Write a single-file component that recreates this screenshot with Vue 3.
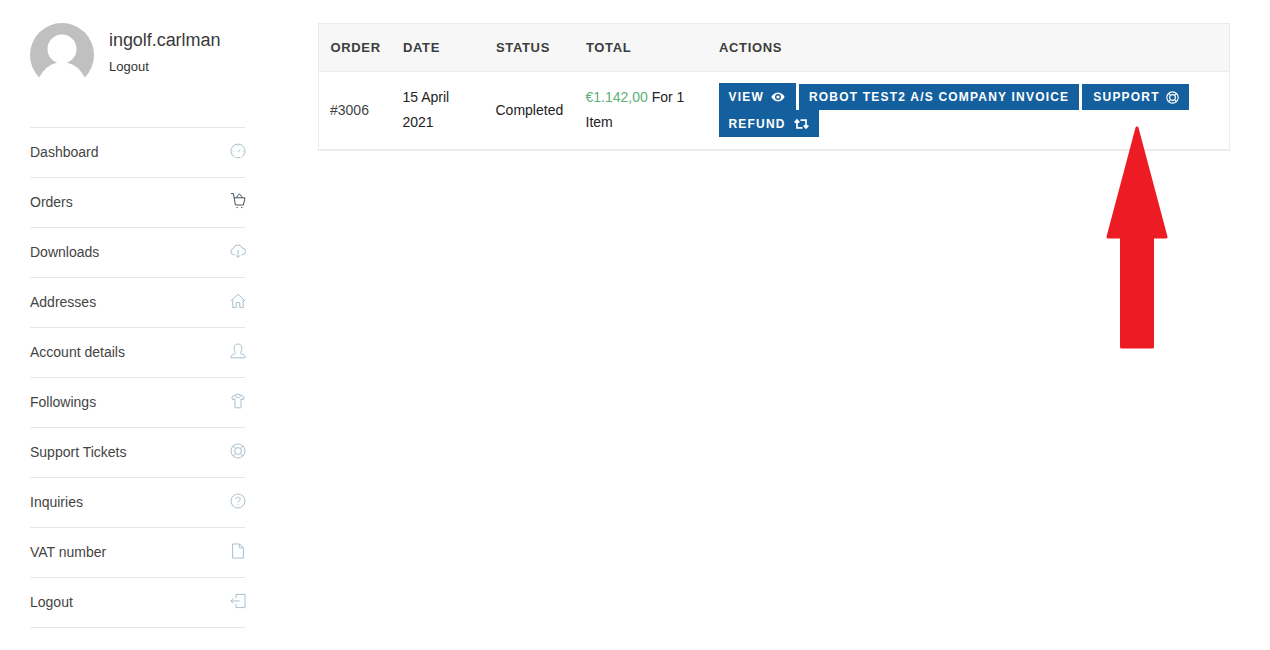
<script setup>
const menu = [
  { label: 'Dashboard', icon: 'gauge' },
  { label: 'Orders', icon: 'cart' },
  { label: 'Downloads', icon: 'cloud' },
  { label: 'Addresses', icon: 'home' },
  { label: 'Account details', icon: 'user' },
  { label: 'Followings', icon: 'shirt' },
  { label: 'Support Tickets', icon: 'buoy' },
  { label: 'Inquiries', icon: 'help' },
  { label: 'VAT number', icon: 'file' },
  { label: 'Logout', icon: 'exit' }
]
const paths = {
  gauge: 'M4.6 14.2A7 7 0 1 1 11.4 14.2M5.6 14.6H10.4M8 9L10.4 6.400M8 2.400V3.200M2.600 8H3.400M12.600 8H13.400',
  cart: 'M1 .6H3.400L5.400 12H13.400M4 4.800H15L13.400 12M6 4.800L9.400 .8L12.600 4.800M6.400 14.600H7.800M11 14.600H12.400',
  cloud: 'M4.6 11.8H3.8A3.2 3.2 0 0 1 3.4 5.5A4.6 4.6 0 0 1 12.2 5A3.4 3.4 0 0 1 12.2 11.8H11.4M8 6.8V14.4M6 12.4L8 14.4L10 12.4',
  home: 'M.8 8L8 1.2L15.2 8M2.8 6.4V14.6H6.2V9.6H9.8V14.6H13.2V6.4',
  user: 'M1 14.8V13.4C1 11.6 5.6 11.2 5.8 9.8C4.6 8.8 4.2 7 4.2 5.2C4.2 2.6 5.8 1 8 1C10.2 1 11.8 2.6 11.8 5.2C11.8 7 11.4 8.8 10.2 9.8C10.4 11.2 15 11.6 15 13.4V14.8Z',
  shirt: 'M5.6 3.4A2.4 2.4 0 1 1 10.4 3.4M5.4 1.8L1.8 4L2.8 6.8L5 5.8V14.8H11V5.8L13.2 6.8L14.2 4L10.6 1.8M5.6 3.4C6.4 5 9.6 5 10.4 3.4',
  buoy: 'M8 1A7 7 0 1 0 8 15A7 7 0 1 0 8 1ZM8 4.6A3.4 3.4 0 1 0 8 11.4A3.4 3.4 0 1 0 8 4.6ZM3.2 2.9L5.6 5.6M12.8 2.9L10.4 5.6M3.2 13.1L5.6 10.4M12.8 13.1L10.4 10.4',
  help: 'M8 1A7 7 0 1 0 8 15A7 7 0 1 0 8 1ZM5.9 6.2C5.9 3.6 10.2 3.6 10.2 6.2C10.2 8 8 8 8 9.8M8 11.2V12',
  file: 'M2.6 1H9.6L13.4 4.8V15H2.6ZM9.6 1V4.8H13.4',
  exit: 'M6 5V1.4H15V14.6H6V11M.8 8H9.6M.8 8L3.4 5.6M.8 8L3.4 10.4'
}
</script>

<template>
  <div class="page">
    <aside class="side">
      <div class="profile">
        <svg class="avatar" width="64" height="64" viewBox="0 0 64 64">
          <circle cx="32" cy="32" r="32" fill="#c0c0c0" />
          <ellipse cx="32" cy="72" rx="27" ry="33" fill="#fff" />
          <circle cx="32" cy="26" r="14.5" fill="#fff" />
          <rect x="27" y="36" width="10" height="6" fill="#fff" />
        </svg>
        <div class="who">
          <div class="name">ingolf.carlman</div>
          <a class="out">Logout</a>
        </div>
      </div>
      <nav class="menu">
        <a v-for="m in menu" :key="m.label" class="item">
          <span>{{ m.label }}</span>
          <svg class="ico" :class="{ dark: m.icon === 'cart' }" width="16" height="16" viewBox="0 0 16 16">
            <path :d="paths[m.icon]" />
          </svg>
        </a>
      </nav>
    </aside>

    <main class="main">
      <table class="orders">
        <colgroup>
          <col class="c1" /><col class="c2" /><col class="c3" /><col class="c4" /><col />
        </colgroup>
        <thead>
          <tr>
            <th>ORDER</th><th>DATE</th><th>STATUS</th><th>TOTAL</th><th>ACTIONS</th>
          </tr>
        </thead>
        <tbody>
          <tr>
            <td class="num">#3006</td>
            <td>15 April 2021</td>
            <td>Completed</td>
            <td><span class="price">€1.142,00</span> For 1 Item</td>
            <td class="acts">
              <div class="btns">
                <a class="btn tall view">VIEW
                  <svg width="14" height="10" viewBox="0 0 14 10">
                    <path d="M7 .6C3.8.6 1.4 3 .4 5C1.4 7 3.8 9.4 7 9.4C10.2 9.4 12.6 7 13.6 5C12.6 3 10.2.6 7 .6Z" fill="#fff" />
                    <circle cx="7" cy="5" r="3" fill="#14609e" />
                    <circle cx="7" cy="5" r="1.6" fill="#fff" />
                  </svg>
                </a>
                <a class="btn">ROBOT TEST2 A/S COMPANY INVOICE</a>
                <a class="btn sup">SUPPORT
                  <svg width="13" height="13" viewBox="0 0 16 16" fill="none" stroke="#fff" stroke-width="1.4">
                    <circle cx="8" cy="8" r="7" />
                    <circle cx="8" cy="8" r="3.6" />
                    <path d="M3 3L5.5 5.5M13 3L10.500 5.500M3 13L5.500 10.500M13 13L10.500 10.500" />
                  </svg>
                </a>
                <a class="btn tall refund">REFUND
                  <svg width="15" height="12" viewBox="0 0 15 12" fill="none" stroke="#fff" stroke-width="1.7">
                    <path d="M3 3V9.800H8.500M.7 4.600L3 2L5.300 4.600M12 9V2.200H6.500M9.700 7.400L12 10L14.300 7.400" />
                  </svg>
                </a>
              </div>
            </td>
          </tr>
        </tbody>
      </table>
    </main>

    <svg class="arrow" width="64" height="227" viewBox="0 0 64 227">
      <path d="M32 3L61 112H47.500V222H16.500V112H3Z" fill="#ed1c24" stroke="#ed1c24" stroke-width="3" stroke-linejoin="round" />
    </svg>
  </div>
</template>

<style>
html, body { margin: 0; background: #fff; }
</style>

<style scoped>
.page {
  position: relative;
  display: flex;
  align-items: flex-start;
  min-height: 650px;
  box-sizing: border-box;
  padding: 23px 40px 0 30px;
  font-family: "Liberation Sans", Arial, sans-serif;
  font-size: 14px;
  color: #333;
  background: #fff;
}
.side { width: 215px; flex: none; }
.profile { display: flex; height: 104px; box-sizing: border-box; }
.avatar { flex: none; display: block; }
.who { margin-left: 15px; }
.name { font-size: 18px; line-height: 20px; margin-top: 7px; color: #3a3a3a; letter-spacing: -.05px; }
.out { display: block; font-size: 13px; line-height: 16px; margin-top: 9px; color: #333; }
.menu { border-top: 1px solid #e6e6e6; }
.item {
  display: flex;
  justify-content: space-between;
  align-items: center;
  box-sizing: border-box;
  height: 50px;
  padding-bottom: 2px;
  border-bottom: 1px solid #e6e6e6;
  color: #444;
}
.ico { margin-top: -1px; margin-right: -1px; }
.ico path { fill: none; stroke: #a9bfcd; stroke-width: 1; }
.ico.dark path { stroke: #44525c; }
.main { width: 912px; margin-left: 73px; flex: none; }
.orders {
  width: 912px;
  border-collapse: collapse;
  table-layout: fixed;
  border: 1px solid #ececec;
  border-bottom-width: 2px;
}
.c1 { width: 73px; }
.c2 { width: 93px; }
.c3 { width: 90px; }
.c4 { width: 133px; }
th {
  height: 48px;
  padding: 0 0 0 11.5px;
  box-sizing: border-box;
  background: #f7f7f7;
  border-bottom: 1px solid #ececec;
  text-align: left;
  font-size: 13px;
  letter-spacing: .65px;
  color: #3d3d3d;
}
td {
  padding: 13px 12px 14px 11px;
  line-height: 25px;
  color: #222;
  vertical-align: middle;
}
.num { color: #444; }
.price { color: #5cb176; }
.acts { padding: 0 12px 1px 11px; }
.btns { display: flex; flex-wrap: wrap; column-gap: 3px; align-items: flex-end; }
.btn {
  display: inline-flex;
  align-items: center;
  gap: 7px;
  height: 26px;
  box-sizing: border-box;
  padding: 0 10px;
  background: #14609e;
  color: #fff;
  font-size: 12px;
  font-weight: 700;
  letter-spacing: 1.2px;
  white-space: nowrap;
}
.btn.tall { height: 27px; padding-top: 1px; }
.btn.view { padding-right: 11px; }
.btn.refund { gap: 8px; }
.btn.sup { gap: 6px; padding-left: 11px; }
.arrow { position: absolute; left: 1105px; top: 125px; }
</style>
